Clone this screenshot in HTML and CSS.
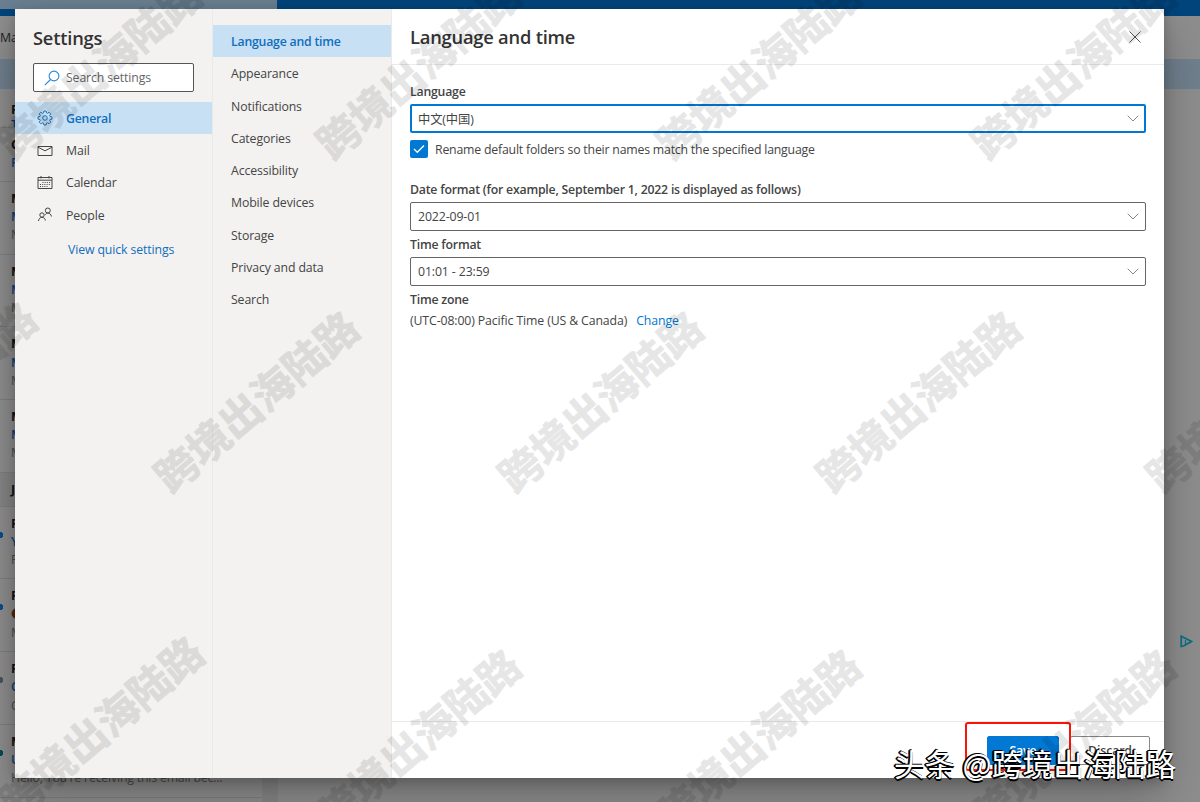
FILE: index.html
```
<!DOCTYPE html>
<html lang="en">
<head>
	<meta charset="UTF-8">
	<meta name="viewport" content="width=device-width, initial-scale=1.0">
	<title>Settings</title>
	<link rel="stylesheet" href="styles.css">
</head>
<body>
	<div id="mailbox">
		<div class="topbar"><div class="topbar-search"></div></div>
		<div class="toolbar">Ma</div>
		<div class="banner"></div>
		<div class="mail-body">
			<div class="mail-list">
				<div class="row first"><b>F</b><i>T</i></div>
				<div class="row short"><b>C</b><i>F</i></div>
				<div class="row"><b>M</b><i>M</i><span>M</span></div>
				<div class="row"><b>M</b><i>M</i><span>M</span></div>
				<div class="row"><b>M</b><i>M</i><span>M</span></div>
				<div class="row"><b>M</b><i>M</i><span>M</span></div>
				<div class="row month"><b>J</b></div>
				<div class="row unread"><b>F</b><i>Y</i><span>F</span></div>
				<div class="row unread"><b>F</b><i class="brown">●</i><span>M</span></div>
				<div class="row unread grey"><b>F</b><i>C</i><span>C</span></div>
				<div class="row unread teal"><b>M</b><i>U</i><span>Hello, You're receiving this email bec...</span></div>
			</div>
			<div class="scroll"></div>
			<div class="reading">
				<svg class="adchoice" width="13" height="13" viewBox="0 0 13 13" fill="none" stroke="#0b6f84" stroke-width="1.7"><path d="M1.2 1.2v10.3L3.5 11 11.5 6.5z"/><path d="M5.5 5v4" stroke-width="1.2"/></svg>
			</div>
		</div>
	</div>

	<div id="dialog">
		<div class="categories">
			<h1>Settings</h1>
			<div class="search">
				<svg width="16" height="16" viewBox="0 0 16 16" fill="none" stroke="#2b88d8" stroke-width="1.1"><circle cx="10" cy="6" r="4.9"/><path d="M6.5 9.5L.8 15.2"/></svg>
				<span>Search settings</span>
			</div>
			<div class="cat active">
				<svg width="16" height="16" viewBox="0 0 16 16" fill="none" stroke="#1a6fb5"><circle cx="8" cy="8" r="2.3"/><path d="M6.9 1h2.2l.4 1.9 1 .4 1.7-1 1.5 1.5-1 1.7.4 1 1.9.4v2.2l-1.9.4-.4 1 1 1.7-1.5 1.5-1.7-1-1 .4-.4 1.9H6.9l-.4-1.9-1-.4-1.7 1-1.5-1.5 1-1.7-.4-1L1 9.1V6.9l1.9-.4.4-1-1-1.7 1.5-1.5 1.7 1 1-.4z"/></svg>
				<span>General</span>
			</div>
			<div class="cat">
				<svg width="16" height="16" viewBox="0 0 16 16" fill="none" stroke="#444"><path d="M1 3.5h14v9H1zM1 4.2l7 3.6 7-3.6"/></svg>
				<span>Mail</span>
			</div>
			<div class="cat">
				<svg width="16" height="16" viewBox="0 0 16 16" fill="none" stroke="#444"><path d="M1 2.5h14v11H1zM1 5.2h14M4 1v2.5M12 1v2.5"/><path d="M5.5 7.5H13M3 9.5h10M3 11.5h7.5" stroke-dasharray="1 1.2"/></svg>
				<span>Calendar</span>
			</div>
			<div class="cat">
				<svg width="16" height="16" viewBox="0 0 16 16" fill="none" stroke="#444"><circle cx="10.8" cy="3.5" r="2.5"/><circle cx="5" cy="8" r="2.2"/><path d="M1.5 14c.2-2 1.5-3.700 3.500-3.700s3.200 1.500 3.400 3.200M8.300 7.800c.5-1 1.300-1.700 2.500-1.700 2 0 3.300 1.300 3.600 3.400"/></svg>
				<span>People</span>
			</div>
			<a class="quick">View quick settings</a>
		</div>

		<div class="sections">
			<div class="section active">Language and time</div>
			<div class="section">Appearance</div>
			<div class="section">Notifications</div>
			<div class="section">Categories</div>
			<div class="section">Accessibility</div>
			<div class="section">Mobile devices</div>
			<div class="section">Storage</div>
			<div class="section">Privacy and data</div>
			<div class="section">Search</div>
		</div>

		<div class="panel">
			<div class="panel-head">
				<h2>Language and time</h2>
				<svg width="12" height="12" viewBox="0 0 12 12" stroke="#555"><path d="M.5.5l11 11M11.5.5l-11 11"/></svg>
			</div>
			<div class="panel-body">
				<label>Language</label>
				<div class="select focus"><span>中文(中国)</span><svg width="12" height="7" viewBox="0 0 12 7" fill="none" stroke="#888"><path d="M.7.7L6 6 11.3.7"/></svg></div>
				<div class="check">
					<div class="box"><svg width="12" height="10" viewBox="0 0 12 10" fill="none" stroke="#fff" stroke-width="1.3"><path d="M1 5l3.3 3.3L11 1.5"/></svg></div>
					<span>Rename default folders so their names match the specified language</span>
				</div>
				<label>Date format (for example, September 1, 2022 is displayed as follows)</label>
				<div class="select"><span>2022-09-01</span><svg width="12" height="7" viewBox="0 0 12 7" fill="none" stroke="#888"><path d="M.7.7L6 6 11.3.7"/></svg></div>
				<label>Time format</label>
				<div class="select"><span>01:01 - 23:59</span><svg width="12" height="7" viewBox="0 0 12 7" fill="none" stroke="#888"><path d="M.7.7L6 6 11.3.7"/></svg></div>
				<label>Time zone</label>
				<div class="zone"><span>(UTC-08:00) Pacific Time (US &amp; Canada)</span><a>Change</a></div>
			</div>
			<div class="panel-foot">
				<div class="btn primary">Save</div>
				<div class="btn">Discard</div>
			</div>
		</div>
	</div>

	<div class="highlight"></div>

	<svg class="watermarks" width="1200" height="802">
		<text transform="translate(98 67) rotate(-40.3)">跨境出海陆路</text>
		<text transform="translate(417 67) rotate(-40.3)">跨境出海陆路</text>
		<text transform="translate(757 67) rotate(-40.3)">跨境出海陆路</text>
		<text transform="translate(1072 67) rotate(-40.3)">跨境出海陆路</text>
		<text transform="translate(-67 391) rotate(-40.3)">跨境出海陆路</text>
		<text transform="translate(255 400) rotate(-40.3)">跨境出海陆路</text>
		<text transform="translate(599 400) rotate(-40.3)">跨境出海陆路</text>
		<text transform="translate(917 400) rotate(-40.3)">跨境出海陆路</text>
		<text transform="translate(1247 400) rotate(-40.3)">跨境出海陆路</text>
		<text transform="translate(100 725) rotate(-40.3)">跨境出海陆路</text>
		<text transform="translate(417 738) rotate(-40.3)">跨境出海陆路</text>
		<text transform="translate(757 738) rotate(-40.3)">跨境出海陆路</text>
		<text transform="translate(1072 738) rotate(-40.3)">跨境出海陆路</text>
	</svg>
	<div class="credit">头条 @跨境出海陆路</div>
</body>
</html>
```
FILE: styles.css
```
:root{
	--blue: #0078d4;
	--link: #106ebe;
	--active: #c7e0f4;
	--pane: #f3f2f1;
	--line: #eaeaea;
}

*{
	box-sizing: border-box;
}

body{
	margin: 0;
	width: 1200px;
	height: 802px;
	overflow: hidden;
	position: relative;
	font-family: "Open Sans", "Noto Sans CJK SC", sans-serif;
	font-size: 12.3px;
	letter-spacing: -.12px;
	color: #444;
}

h1, h2{
	margin: 0;
	font-size: 18.3px;
	line-height: 24px;
	font-weight: 600;
	letter-spacing: -.2px;
	color: #333;
}

/* mailbox behind the dialog */
#mailbox{
	height: 802px;
	display: flex;
	flex-direction: column;
	background: #8e8e8e;
}

.topbar{
	height: 16px;
	background: #00457c;
}

.topbar-search{
	width: 277px;
	height: 9px;
	background: #6a8091;
}

.toolbar{
	height: 43px;
	line-height: 43px;
	color: #222;
}

.banner{
	height: 30px;
	background: #70808d;
}

.mail-body{
	flex: 1;
	display: flex;
}

.mail-list{
	width: 262px;
}

.row{
	height: 72.7px;
	padding: 8px 0 0 11px;
	border-bottom: 1px solid #7f7f7f;
	display: flex;
	flex-direction: column;
	line-height: 18.2px;
	white-space: nowrap;
	letter-spacing: -.18px;
	color: #4c4c4c;
}

.row b{
	color: #111;
}

.row i{
	font-style: normal;
	font-weight: 600;
	color: #0b3f7c;
}

.row .brown{
	color: #4b2a18;
}

.row.first{
	height: 39px;
	padding-top: 13px;
	line-height: 15px;
	overflow: hidden;
}

.row.short{
	height: 54px;
}

.row.month{
	height: 34px;
	background: #868686;
}

.unread{
	background: radial-gradient(circle at 0 28px, #0b4a90 3px, transparent 3.5px);
}

.unread.grey{
	background: radial-gradient(circle at 0 28px, #48545c 3px, transparent 3.5px);
}

.unread.teal{
	background: radial-gradient(circle at 0 28px, #07495a 3px, transparent 3.5px);
}

.scroll{
	width: 16px;
	background: #868686;
}

.reading{
	flex: 1;
	display: flex;
	justify-content: flex-end;
	padding: 546px 7px 0 0;
}

/* settings dialog */
#dialog{
	position: absolute;
	left: 15px;
	top: 9px;
	width: 1149px;
	height: 769px;
	display: flex;
	background: #fff;
	box-shadow: 0 20px 46px rgba(0,0,0,.25), 0 4px 12px rgba(0,0,0,.22);
}

.categories{
	width: 198px;
	padding-top: 17px;
	background: var(--pane);
	border-right: 1px solid var(--line);
}

.categories h1{
	padding-left: 18px;
}

.search{
	margin: 13px 18px 10px;
	height: 29px;
	display: flex;
	align-items: center;
	padding-left: 10px;
	gap: 6px;
	background: #fff;
	border: 1px solid #555;
	border-radius: 2px;
	color: #666;
}

.cat{
	height: 32.4px;
	display: flex;
	align-items: center;
	padding-left: 22px;
	gap: 13px;
}

.cat.active, .section.active{
	background: var(--active);
	color: var(--link);
	font-weight: 600;
	letter-spacing: -.22px;
}

.quick{
	display: block;
	margin: 9px 0 0 53px;
	line-height: 18px;
	color: var(--link);
}

.sections{
	width: 179px;
	padding-top: 16px;
	background: var(--pane);
	border-right: 1px solid var(--line);
}

.section{
	height: 32.3px;
	line-height: 34px;
	padding-left: 18px;
}

.panel{
	flex: 1;
	display: flex;
	flex-direction: column;
}

.panel-head{
	height: 56px;
	padding: 1px 23px 0 18px;
	display: flex;
	align-items: center;
	justify-content: space-between;
	border-bottom: 1px solid var(--line);
}

.panel-body{
	flex: 1;
	padding: 18px 18px 0;
}

label{
	display: block;
	height: 18px;
	line-height: 18px;
	font-weight: 600;
	letter-spacing: -.22px;
	margin-bottom: 3px;
}

.select{
	height: 29px;
	margin-bottom: 5px;
	padding: 0 6px 0 7px;
	display: flex;
	align-items: center;
	justify-content: space-between;
	border: 1px solid #666;
	border-radius: 2px;
}

.select.focus{
	border: 2px solid var(--blue);
	padding: 0 5px 0 6px;
	margin-bottom: 7px;
}

.check{
	display: flex;
	align-items: center;
	gap: 7px;
	height: 18px;
	margin-bottom: 23px;
	letter-spacing: -.2px;
}

.box{
	width: 18px;
	height: 18px;
	display: flex;
	align-items: center;
	justify-content: center;
	background: var(--blue);
	border-radius: 2px;
}

.zone{
	display: flex;
	gap: 9px;
	line-height: 18px;
}

.zone a{
	color: var(--blue);
}

.panel-foot{
	height: 57px;
	padding: 14px 14px 0 0;
	display: flex;
	justify-content: flex-end;
	gap: 11px;
	border-top: 1px solid var(--line);
}

.btn{
	width: 80px;
	height: 29px;
	line-height: 27px;
	text-align: center;
	font-weight: 600;
	border: 1px solid #888;
	border-radius: 2px;
}

.btn.primary{
	width: 72px;
	background: var(--blue);
	border-color: var(--blue);
	color: #fff;
}

.highlight{
	position: absolute;
	left: 965px;
	top: 722px;
	width: 106px;
	height: 49px;
	border: 2px solid #fb1208;
	border-radius: 3px;
}

/* overlays */
.watermarks{
	position: absolute;
	left: 0;
	top: 0;
	opacity: .095;
	fill: #000;
	stroke: #000;
	stroke-width: .9px;
	font-family: "Noto Sans CJK SC", sans-serif;
	font-weight: 700;
	font-size: 41.8px;
	letter-spacing: 0;
	text-anchor: middle;
	dominant-baseline: central;
}

.credit{
	position: absolute;
	left: 894px;
	top: 741px;
	font-family: "Noto Sans CJK SC", sans-serif;
	font-size: 30.8px;
	letter-spacing: 0;
	line-height: 44px;
	white-space: nowrap;
	color: #fff;
	text-shadow: -2px 0 0 #000, -1px 1px 0 #000, -1px -1px 0 #000, 0 2px 0 #000;
}
```
